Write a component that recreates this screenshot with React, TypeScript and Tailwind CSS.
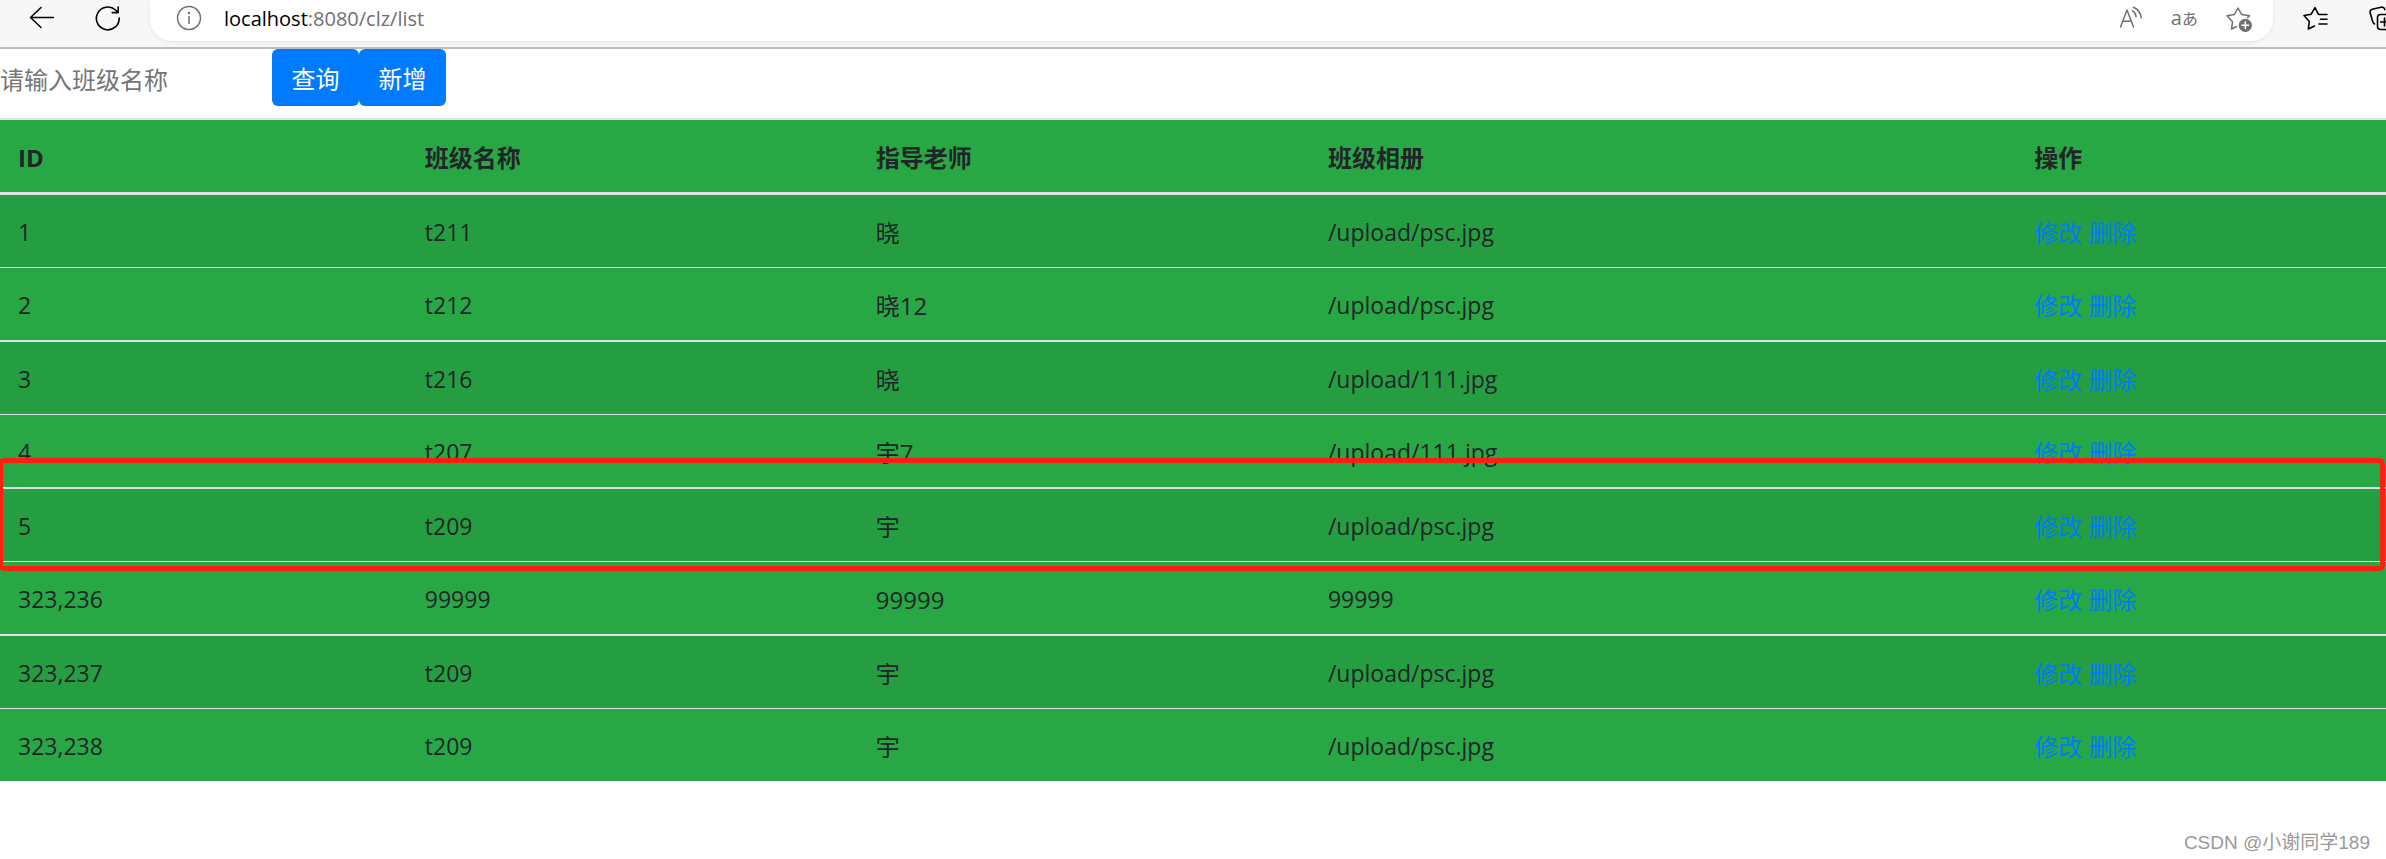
import { useState } from "react";

interface ClassRow {
  id: string;
  name: string;
  teacher: string;
  album: string;
}

const COLUMNS = [
  { label: "ID", width: "w-[17.05%]" },
  { label: "班级名称", width: "w-[18.9%]" },
  { label: "指导老师", width: "w-[18.95%]" },
  { label: "班级相册", width: "w-[29.6%]" },
  { label: "操作", width: "" },
];

const ROWS: ClassRow[] = [
  { id: "1", name: "t211", teacher: "晓", album: "/upload/psc.jpg" },
  { id: "2", name: "t212", teacher: "晓12", album: "/upload/psc.jpg" },
  { id: "3", name: "t216", teacher: "晓", album: "/upload/111.jpg" },
  { id: "4", name: "t207", teacher: "宇7", album: "/upload/111.jpg" },
  { id: "5", name: "t209", teacher: "宇", album: "/upload/psc.jpg" },
  { id: "323,236", name: "99999", teacher: "99999", album: "99999" },
  { id: "323,237", name: "t209", teacher: "宇", album: "/upload/psc.jpg" },
  { id: "323,238", name: "t209", teacher: "宇", album: "/upload/psc.jpg" },
];

function BackIcon() {
  return (
    <svg width="26" height="24" viewBox="0 0 26 24" fill="none" stroke="currentColor" strokeWidth="1.5" strokeLinecap="round" strokeLinejoin="round">
      <path d="M24.5 11.5H1.5M12 1.5 1.5 11.5 12 21.5" />
    </svg>
  );
}

function ReloadIcon() {
  return (
    <svg width="26" height="26" viewBox="0 0 26 26" fill="none" stroke="currentColor" strokeWidth="1.6" strokeLinecap="round" strokeLinejoin="round">
      <path d="M24.2 13A11.4 11.4 0 1 1 20.5 5l2.7 2.6M23.2 2v5.6h-6" />
    </svg>
  );
}

function InfoIcon() {
  return (
    <svg width="26" height="26" viewBox="0 0 26 26" fill="none" stroke="currentColor" strokeWidth="1.5">
      <circle cx="13" cy="13" r="11.5" />
      <path d="M13 11v8" />
      <circle cx="13" cy="8" r="1.2" fill="currentColor" stroke="none" />
    </svg>
  );
}

function ReadAloudIcon() {
  return (
    <svg width="24" height="24" viewBox="0 0 24 24" fill="none" stroke="currentColor" strokeWidth="1.5" strokeLinecap="round" strokeLinejoin="round">
      <path d="M1.5 21 8 4l6.5 17M4 15.2h8.5" />
      <path d="M13.5 4.7c2 1.2 3.3 3.2 3.6 6M14.5 1.2c4.2 2 7.2 5.8 7.7 10.6" />
    </svg>
  );
}

function StarPlusIcon() {
  return (
    <svg width="27" height="27" viewBox="0 0 27 27" fill="none" stroke="currentColor" strokeWidth="1.5" strokeLinejoin="round" strokeLinecap="round">
      <path d="M10.5 21.8 5.5 24l1-7.2L1 10.8l7.3-1.2L12 3l3.7 6.6 7.8 1.2-1.8 1.9" />
      <circle cx="19.3" cy="20.3" r="6.6" fill="currentColor" stroke="none" />
      <path d="M19.3 17v6.6M16 20.3h6.6" stroke="white" />
    </svg>
  );
}

function FavoritesIcon() {
  return (
    <svg width="26" height="26" viewBox="0 0 26 26" fill="none" stroke="currentColor" strokeWidth="1.6" strokeLinejoin="round" strokeLinecap="round">
      <path d="M11.5 21 5.3 24l1-7.5L1 10.5l7.2-1.3L12 2.7l3.5 6.8H24M17.5 14.3H24M16 19H24" />
    </svg>
  );
}

function CollectionsIcon() {
  return (
    <svg width="17" height="28" viewBox="0 0 17 28" fill="none" stroke="currentColor" strokeWidth="1.6" strokeLinejoin="round" strokeLinecap="round">
      <path d="M5.5 20C4.5 19.5 4 18.5 3.7 17.5L1.2 9a3 3 0 0 1 2-3.7l9-2.1a3 3 0 0 1 3.6 2.5" />
      <path d="M20 10.5h-8.5a3 3 0 0 0-3 3v9a3 3 0 0 0 3 3H20M15.5 14v8M11.5 18H20" />
    </svg>
  );
}

function BrowserBar() {
  return (
    <header className="flex h-[49px] items-start overflow-hidden border-b-2 border-[#bdbdbd] bg-[#f7f7f7] text-black">
      <div className="flex h-9 w-[150px] shrink-0 items-center gap-10 pl-[29px]">
        <button aria-label="后退"><BackIcon /></button>
        <button aria-label="刷新"><ReloadIcon /></button>
      </div>
      <div className="flex h-[41px] flex-1 items-start rounded-b-[22px] bg-white pr-5 pl-[26px] text-[#707070] shadow-[0_1px_4px_rgba(0,0,0,0.08)]">
        <div className="flex h-9 flex-1 items-center gap-[22px]">
          <InfoIcon />
          <span className="pt-0.5 text-xl leading-9">
            <span className="text-black">localhost</span>:8080/clz/list
          </span>
        </div>
        <div className="flex h-9 items-center gap-7">
          <button aria-label="朗读此页"><ReadAloudIcon /></button>
          <button aria-label="翻译" className="flex items-baseline text-xl leading-8">
            a<span className="text-base leading-8">あ</span>
          </button>
          <button aria-label="收藏此页"><StarPlusIcon /></button>
        </div>
      </div>
      <div className="flex h-9 shrink-0 items-center gap-10 pl-[30px]">
        <button aria-label="收藏夹"><FavoritesIcon /></button>
        <button aria-label="集锦"><CollectionsIcon /></button>
      </div>
    </header>
  );
}

export default function App() {
  const [keyword, setKeyword] = useState("");

  return (
    <div className="bg-white font-['Open_Sans','Noto_Sans_CJK_SC',sans-serif] text-2xl text-[#212529]">
      <BrowserBar />

      <form className="flex h-[69px] items-start" onSubmit={(e) => e.preventDefault()}>
        <input
          aria-label="班级名称"
          placeholder="请输入班级名称"
          value={keyword}
          onChange={(e) => setKeyword(e.target.value)}
          className="h-[60px] w-[272px] outline-none placeholder:text-[#757575]"
        />
        <button className="h-[57px] w-[87px] rounded-md bg-[#007bff] pt-[3px] text-white">查询</button>
        <button type="button" className="h-[57px] w-[87px] rounded-md bg-[#007bff] pt-[3px] text-white">新增</button>
      </form>

      <div className="relative">
        <table className="w-full table-fixed border-separate border-spacing-0 bg-[#28a745]">
          <thead>
            <tr>
              {COLUMNS.map((col) => (
                <th
                  key={col.label}
                  className={`${col.width} h-[77px] border-t-2 border-b-3 border-[#dee2e6] px-[18px] pt-[3px] pb-0 text-left font-bold`}
                >
                  {col.label}
                </th>
              ))}
            </tr>
          </thead>
          <tbody className="[&_td]:border-[#dee2e6] [&_td]:px-[18px] [&_td]:pt-[3px] [&_td]:pb-0 [&>tr:first-child>td]:h-[72px] [&>tr:first-child>td]:border-t-0 [&>tr:nth-child(even)>td]:h-[73px] [&>tr:nth-child(even)>td]:border-t [&>tr:nth-child(odd)]:bg-black/5">
            {ROWS.map((row) => (
              <tr key={row.id} className="[&>td]:h-[74px] [&>td]:border-t-2">
                <td className="text-[23px]">{row.id}</td>
                <td className="text-[23px]">{row.name}</td>
                <td>{row.teacher}</td>
                <td className="text-[23px]">{row.album}</td>
                <td className="text-[#007bff]">
                  <a href="#edit">修改</a> <a href="#delete">删除</a>
                </td>
              </tr>
            ))}
          </tbody>
        </table>
        <div className="pointer-events-none absolute top-[340px] right-px -left-0.5 h-[113px] rounded-md border-5 border-[#ff1f10]" />
      </div>

      <footer className="flex h-[78px] items-end justify-end pr-4 pb-1 font-['Liberation_Sans','Noto_Sans_CJK_SC',sans-serif] text-[19px] text-[#999]">
        CSDN @小谢同学189
      </footer>
    </div>
  );
}
